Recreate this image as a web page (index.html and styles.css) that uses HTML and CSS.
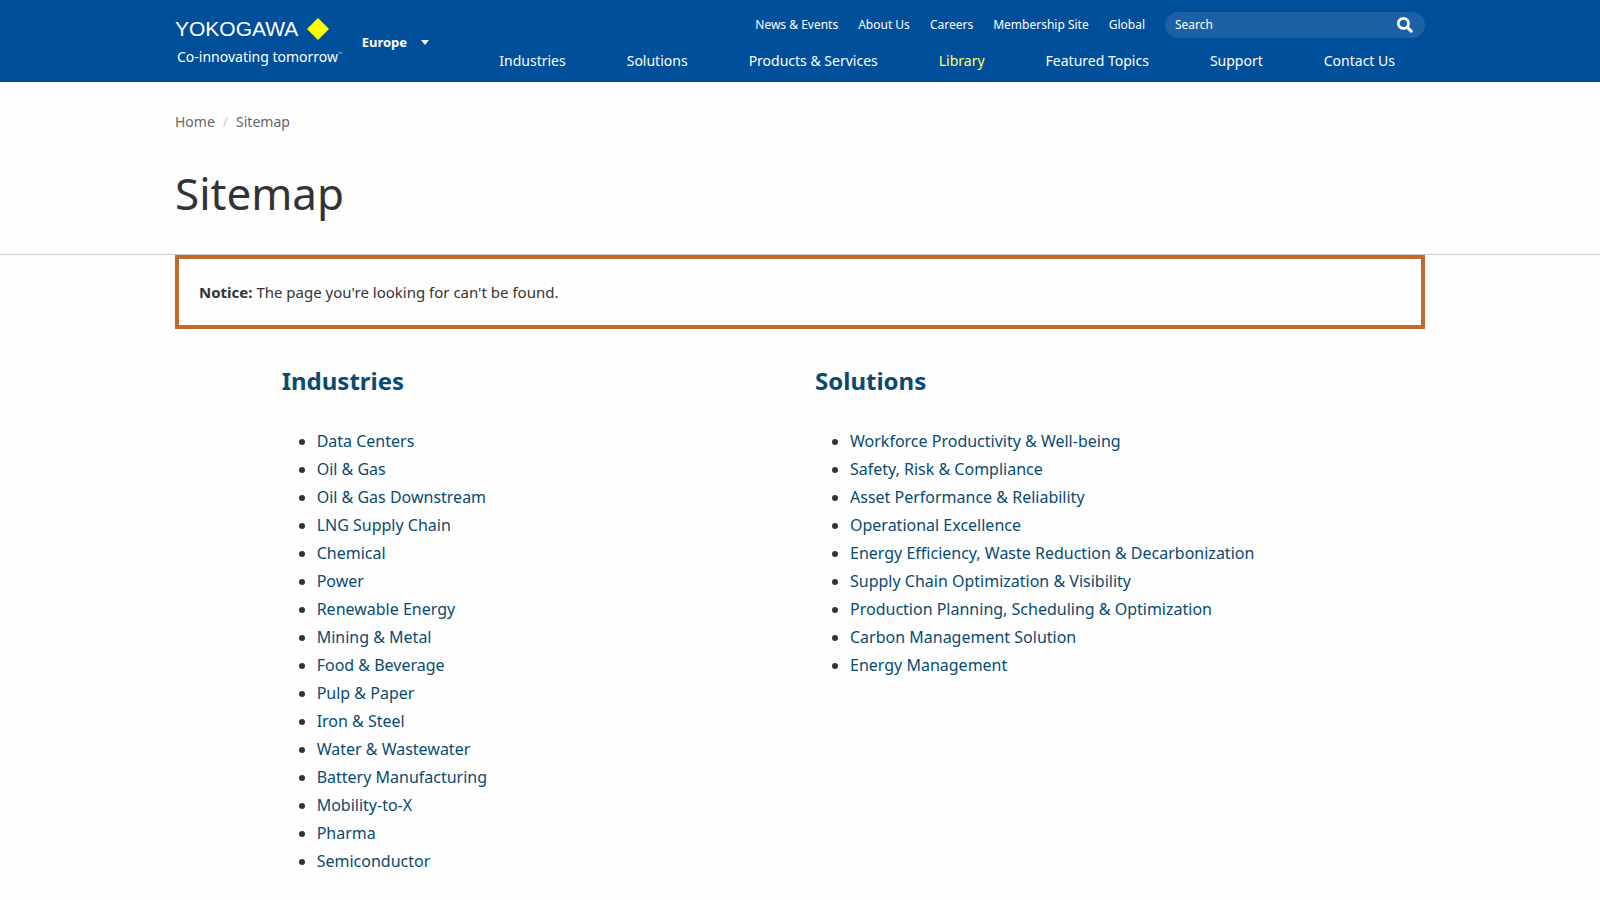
FILE: index.html
```html
<!DOCTYPE html>
<html lang="en">
<head>
    <meta charset="UTF-8">
    <meta name="viewport" content="width=device-width, initial-scale=1.0">
    <title>Sitemap | Yokogawa Europe</title>
    <link rel="stylesheet" href="styles.css">
</head>
<body>

<!-- Header -->
<header class="site-header">
    <div class="container header-inner">
        <div class="brand">
            <a href="#" class="logo">
                <span class="logo-name">YOKOGAWA
                    <svg class="logo-mark" viewBox="0 0 22 22" aria-hidden="true"><path d="M11 0L22 11L11 22L0 11Z" fill="#ffff00"/></svg>
                </span>
                <span class="logo-tagline">Co-innovating tomorrow<sup>™</sup></span>
            </a>
            <button type="button" class="region-btn">Europe
                <svg class="caret" viewBox="0 0 8 5" aria-hidden="true"><path d="M0 0H8L4 5Z" fill="currentColor"/></svg>
            </button>
        </div>
        <div class="header-nav">
            <div class="top-row">
                <nav class="top-nav" aria-label="Utility">
                    <a href="#">News &amp; Events</a>
                    <a href="#">About Us</a>
                    <a href="#">Careers</a>
                    <a href="#">Membership Site</a>
                    <a href="#">Global</a>
                </nav>
                <form class="search">
                    <input type="text" placeholder="Search" aria-label="Search">
                    <button type="submit" aria-label="Submit search">
                        <svg viewBox="0 0 14 14" aria-hidden="true"><circle cx="5.6" cy="5.6" r="4.4" fill="none" stroke="currentColor" stroke-width="2.4"/><path d="M9 9L12.4 12.4" stroke="currentColor" stroke-width="2.8" stroke-linecap="round"/></svg>
                    </button>
                </form>
            </div>
            <nav class="main-nav" aria-label="Main">
                <a href="#">Industries</a>
                <a href="#">Solutions</a>
                <a href="#">Products &amp; Services</a>
                <a href="#" class="active">Library</a>
                <a href="#">Featured Topics</a>
                <a href="#">Support</a>
                <a href="#">Contact Us</a>
            </nav>
        </div>
    </div>
</header>

<!-- Page title -->
<div class="page-title">
    <div class="container">
        <ol class="breadcrumb">
            <li><a href="#">Home</a></li>
            <li>Sitemap</li>
        </ol>
        <h1>Sitemap</h1>
    </div>
</div>

<main class="container">
    <div class="notice"><strong>Notice:</strong> The page you're looking for can't be found.</div>

    <div class="sitemap">
        <section class="sitemap-col">
            <h2><a href="#">Industries</a></h2>
            <ul>
                <li><a href="#">Data Centers</a></li>
                <li><a href="#">Oil &amp; Gas</a></li>
                <li><a href="#">Oil &amp; Gas Downstream</a></li>
                <li><a href="#">LNG Supply Chain</a></li>
                <li><a href="#">Chemical</a></li>
                <li><a href="#">Power</a></li>
                <li><a href="#">Renewable Energy</a></li>
                <li><a href="#">Mining &amp; Metal</a></li>
                <li><a href="#">Food &amp; Beverage</a></li>
                <li><a href="#">Pulp &amp; Paper</a></li>
                <li><a href="#">Iron &amp; Steel</a></li>
                <li><a href="#">Water &amp; Wastewater</a></li>
                <li><a href="#">Battery Manufacturing</a></li>
                <li><a href="#">Mobility-to-X</a></li>
                <li><a href="#">Pharma</a></li>
                <li><a href="#">Semiconductor</a></li>
            </ul>
        </section>
        <section class="sitemap-col">
            <h2><a href="#">Solutions</a></h2>
            <ul>
                <li><a href="#">Workforce Productivity &amp; Well-being</a></li>
                <li><a href="#">Safety, Risk &amp; Compliance</a></li>
                <li><a href="#">Asset Performance &amp; Reliability</a></li>
                <li><a href="#">Operational Excellence</a></li>
                <li><a href="#">Energy Efficiency, Waste Reduction &amp; Decarbonization</a></li>
                <li><a href="#">Supply Chain Optimization &amp; Visibility</a></li>
                <li><a href="#">Production Planning, Scheduling &amp; Optimization</a></li>
                <li><a href="#">Carbon Management Solution</a></li>
                <li><a href="#">Energy Management</a></li>
            </ul>
        </section>
    </div>
</main>

</body>
</html>
```

FILE: styles.css
```css
* { box-sizing: border-box; }

body {
    margin: 0;
    font-family: "Noto Sans", sans-serif;
    font-size: 16px;
    line-height: 28px;
    color: #333;
    background: #fefefe;
}
a { color: inherit; text-decoration: none; }
a:hover { text-decoration: underline; }
button, input { font: inherit; color: inherit; border: 0; background: none; padding: 0; }
button { cursor: pointer; }
svg { display: block; }

.container {
    max-width: 1250px;
    margin: 0 auto;
}

/* Header */
.site-header {
    background: #004f9b;
    color: #fff;
    border-bottom: 1px solid #004380;
}
.header-inner {
    display: flex;
    justify-content: space-between;
}
.brand {
    display: flex;
    align-items: flex-start;
    gap: 19px;
    padding-top: 16px;
}
.logo:hover { text-decoration: none; }
.logo-name {
    display: flex;
    align-items: center;
    gap: 9px;
    font-family: "Liberation Sans", Arial, sans-serif;
    font-size: 21px;
    line-height: 25px;
}
.logo-mark { width: 22px; height: 22px; }
.logo-tagline {
    display: block;
    padding-left: 2px;
    font-size: 14px;
    line-height: 32px;
}
.logo-tagline sup {
    font-size: 6px;
    line-height: 1;
    opacity: 0.5;
}
.region-btn {
    display: flex;
    align-items: center;
    gap: 14px;
    margin-top: 16px;
    font-size: 13px;
    font-weight: 700;
    line-height: 20px;
}
.caret { width: 8px; height: 5px; }

.top-row {
    display: flex;
    justify-content: flex-end;
    align-items: center;
    gap: 20px;
    padding-top: 12px;
}
.top-nav {
    display: flex;
    gap: 20px;
    font-size: 12px;
    line-height: 26px;
}
.search {
    display: flex;
    align-items: center;
    width: 260px;
    height: 26px;
    padding: 0 12px 0 10px;
    border-radius: 13px;
    background: #1c61a6;
    font-size: 12px;
}
.search input { flex: 1; min-width: 0; outline: 0; }
.search input::placeholder { color: #fff; opacity: 1; }
.search svg { width: 16px; height: 16px; }

.main-nav {
    display: flex;
    gap: 61px;
    padding: 9px 30px 6px 0;
    font-size: 14px;
}
.main-nav .active { color: #ffff64; }

/* Title block */
.page-title {
    padding: 26px 0 31px;
    border-bottom: 1px solid #ccc;
}
.breadcrumb {
    display: flex;
    margin: 0 0 27px;
    padding: 0;
    list-style: none;
    font-size: 14px;
    color: #666;
}
.breadcrumb li + li::before {
    content: "/";
    padding: 0 8px;
    color: #ccc;
}
h1 {
    margin: 0;
    font-size: 44px;
    font-weight: 400;
    line-height: 60px;
}

.notice {
    padding: 20px;
    border: 4px solid #bf6a2a;
    font-size: 15px;
    line-height: 26px;
}

/* Sitemap lists */
.sitemap {
    display: grid;
    grid-template-columns: repeat(12, 1fr);
    margin: 35px -15px 0;
}
.sitemap-col {
    grid-column: span 5;
    padding: 0 15px;
    color: #0a4a70;
}
.sitemap-col:first-child { grid-column: 2 / span 5; }
h2 {
    margin: 0 0 29px;
    font-size: 24px;
    line-height: 34px;
}
.sitemap ul {
    margin: 0;
    padding: 0 0 0 35px;
}
.sitemap li::marker { color: #333; }
```
